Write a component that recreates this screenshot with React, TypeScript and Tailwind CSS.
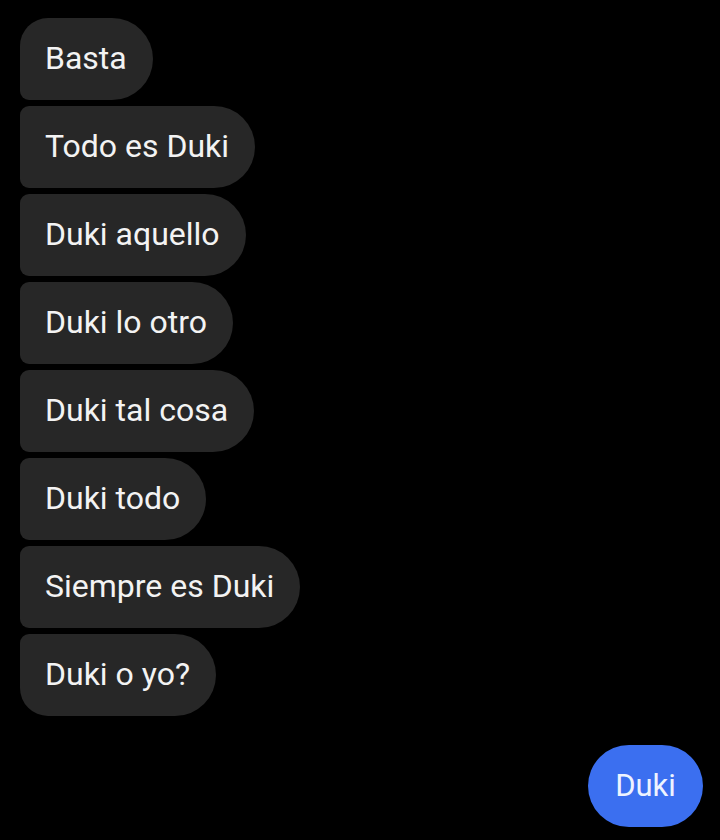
const messages = [
  "Basta",
  "Todo es Duki",
  "Duki aquello",
  "Duki lo otro",
  "Duki tal cosa",
  "Duki todo",
  "Siempre es Duki",
  "Duki o yo?",
];

export default function App() {
  return (
    <div
      className="w-[720px] h-[840px] bg-black overflow-hidden flex flex-col px-[20px] pt-[18px]"
      style={{ fontFamily: "Roboto, 'Liberation Sans', sans-serif" }}
    >
      {/* Received messages */}
      <div className="flex flex-col items-start gap-[6px]">
        {messages.map((m, i) => {
          const first = i === 0;
          const last = i === messages.length - 1;
          return (
            <div
              key={m}
              className={
                "h-[82px] flex items-center pl-[25px] pr-[26px] pb-[2px] bg-[#272727] text-[#f3f3f3] text-[32px] rounded-r-[41px] " +
                (first ? "rounded-tl-[28px] " : "rounded-tl-[9px] ") +
                (last ? "rounded-bl-[28px]" : "rounded-bl-[9px]")
              }
            >
              {m}
            </div>
          );
        })}
      </div>

      {/* Sent message */}
      <div className="flex justify-end mt-[29px]">
        <div className="h-[82px] w-[115px] mr-[-3px] flex items-center justify-center rounded-full bg-[#3b6ff0] text-[#eef3ff] text-[31px]">
          Duki
        </div>
      </div>
    </div>
  );
}
